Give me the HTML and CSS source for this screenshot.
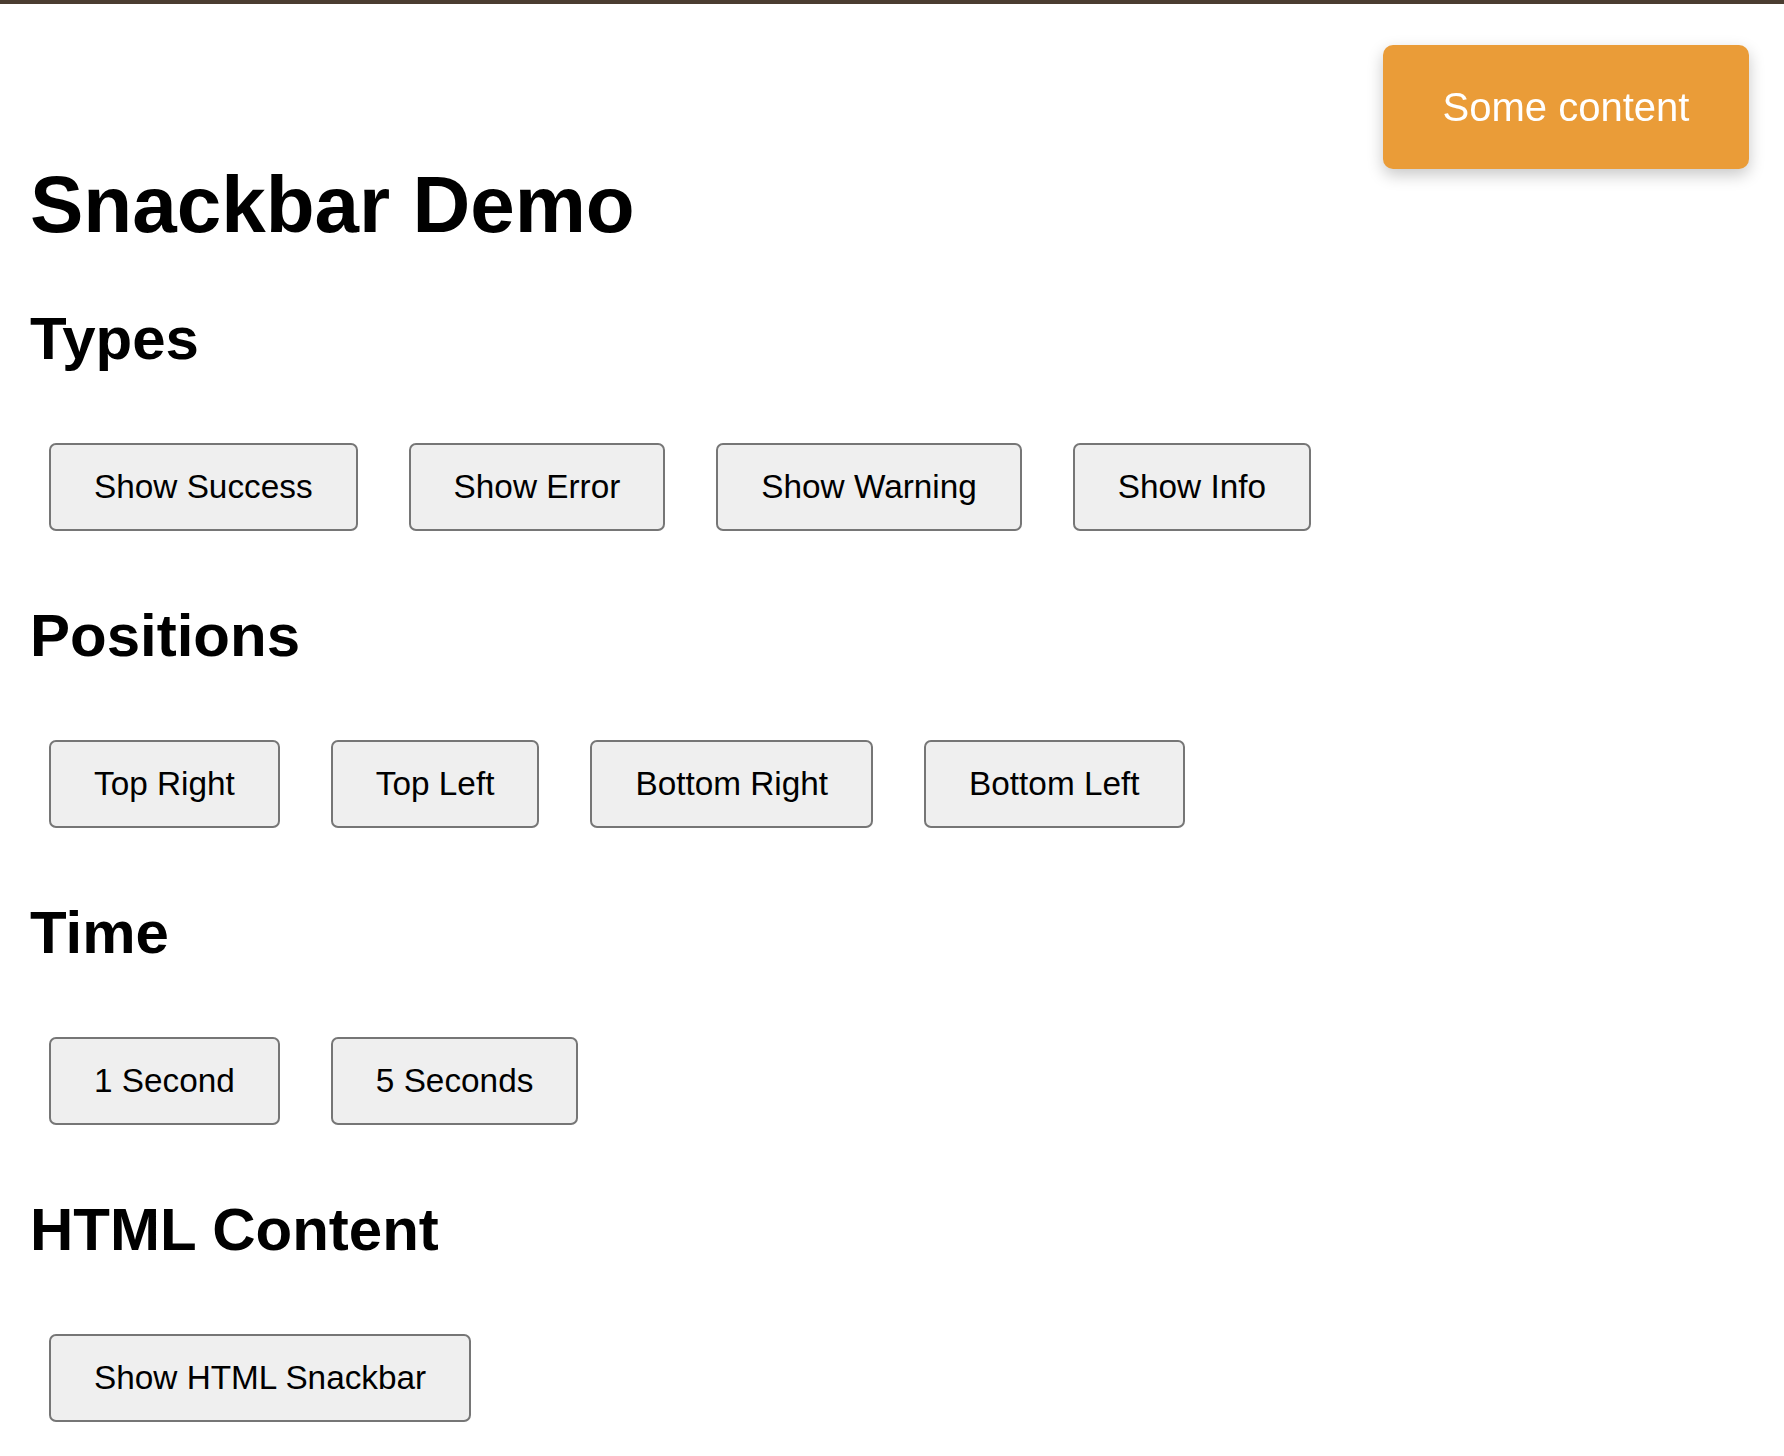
FILE: index.html
```html
<!DOCTYPE html>
<html lang="en">
<head>
<meta charset="utf-8">
<title>Snackbar Demo</title>
<link rel="stylesheet" href="styles.css">
</head>
<body>
<div class="topbar"></div>
<main class="page">
  <h1 class="title">Snackbar Demo</h1>

  <section class="section">
    <h2 class="section-title">Types</h2>
    <div class="btn-row">
      <button class="btn">Show Success</button>
      <button class="btn">Show Error</button>
      <button class="btn">Show Warning</button>
      <button class="btn">Show Info</button>
    </div>
  </section>

  <section class="section">
    <h2 class="section-title">Positions</h2>
    <div class="btn-row">
      <button class="btn">Top Right</button>
      <button class="btn">Top Left</button>
      <button class="btn">Bottom Right</button>
      <button class="btn">Bottom Left</button>
    </div>
  </section>

  <section class="section">
    <h2 class="section-title">Time</h2>
    <div class="btn-row">
      <button class="btn">1 Second</button>
      <button class="btn">5 Seconds</button>
    </div>
  </section>

  <section class="section">
    <h2 class="section-title">HTML Content</h2>
    <div class="btn-row">
      <button class="btn">Show HTML Snackbar</button>
    </div>
  </section>
</main>

<div class="snackbar">Some content</div>
</body>
</html>
```

FILE: styles.css
```css
html, body {
  margin: 0;
  padding: 0;
  background: #ffffff;
}

body {
  font-family: "Liberation Sans", Arial, sans-serif;
  color: #000000;
}

.topbar {
  height: 4px;
  background: #4b3d31;
}

.page {
  padding: 155px 0 0 30px;
  display: flex;
  flex-direction: column;
}

.title {
  margin: 0;
  font-size: 80px;
  line-height: 92px;
  font-weight: bold;
}

.section {
  display: flex;
  flex-direction: column;
}

.section-title {
  margin: 53px 0 0 0;
  font-size: 60px;
  line-height: 69px;
  font-weight: bold;
}

.section + .section .section-title {
  margin-top: 70px;
}

.btn-row {
  display: flex;
  gap: 51px;
  margin: 70px 0 0 19px;
}

.btn {
  font-family: "Liberation Sans", Arial, sans-serif;
  font-size: 33.33px;
  line-height: 39px;
  color: #000000;
  background: #efefef;
  border: 2px solid #767676;
  border-radius: 7px;
  padding: 22px 43px 23px;
  margin: 0;
}

.snackbar {
  position: fixed;
  top: 45px;
  right: 35px;
  width: 366px;
  box-sizing: border-box;
  padding: 39px 0;
  text-align: center;
  font-size: 40px;
  line-height: 46px;
  color: #ffffff;
  background: #ea9c38;
  border-radius: 10px;
  box-shadow: 0 6px 16px rgba(0, 0, 0, 0.22);
}
```
